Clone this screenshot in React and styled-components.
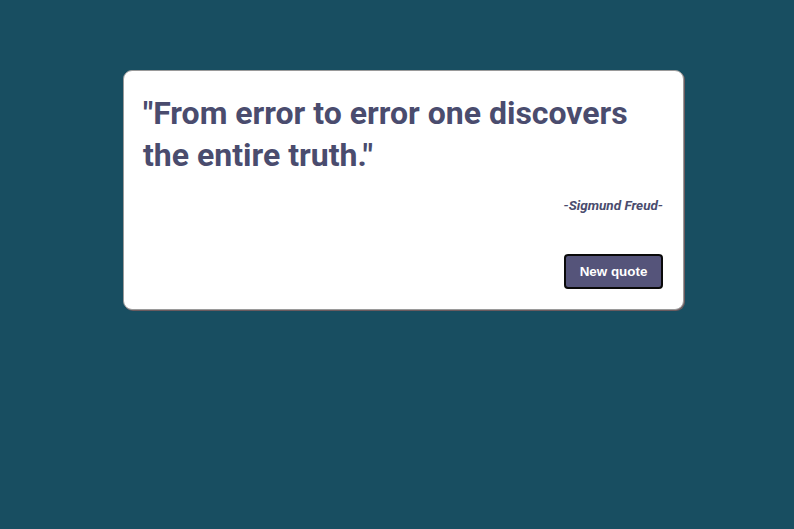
import React from "react";
import styled, { createGlobalStyle } from "styled-components";

const Global = createGlobalStyle`
  html, body { margin: 0; padding: 0; }
  body {
    background: #184e61;
    min-height: 100vh;
    font-family: Roboto, "Liberation Sans", sans-serif;
  }
`;

const Page = styled.div`
  display: flex;
  justify-content: center;
  padding: 70px 0 0 13px;
`;

const Card = styled.div`
  width: 520px;
  background: #ffffff;
  border: 1px solid #9a9a9a;
  border-radius: 9px;
  padding: 21px 20px 20px 19px;
  box-shadow: 1px 1px 0 #6b5a5e;
  display: flex;
  flex-direction: column;
`;

const Quote = styled.h1`
  margin: 0;
  font-family: Roboto, "Liberation Sans", sans-serif;
  font-weight: 700;
  font-size: 32px;
  line-height: 42px;
  color: #4a4c6e;
`;

const Author = styled.p`
  margin: 21px 0 0;
  text-align: right;
  font-family: Roboto, "Liberation Sans", sans-serif;
  font-style: italic;
  font-weight: 700;
  font-size: 13.5px;
  color: #4a4c6e;
`;

const Actions = styled.div`
  display: flex;
  justify-content: flex-end;
  margin-top: 41px;
`;

const Button = styled.button`
  width: 99px;
  height: 35px;
  background: #55547a;
  color: #ffffff;
  border: 2px solid #0a0a0a;
  border-radius: 4px;
  font-family: "Liberation Sans", Arial, sans-serif;
  font-weight: 700;
  font-size: 13.4px;
  cursor: pointer;
`;

export default function App() {
  return (
    <>
      <Global />
      <Page>
        <Card>
          <Quote>"From error to error one discovers the entire truth."</Quote>
          <Author>-Sigmund Freud-</Author>
          <Actions>
            <Button>New quote</Button>
          </Actions>
        </Card>
      </Page>
    </>
  );
}
